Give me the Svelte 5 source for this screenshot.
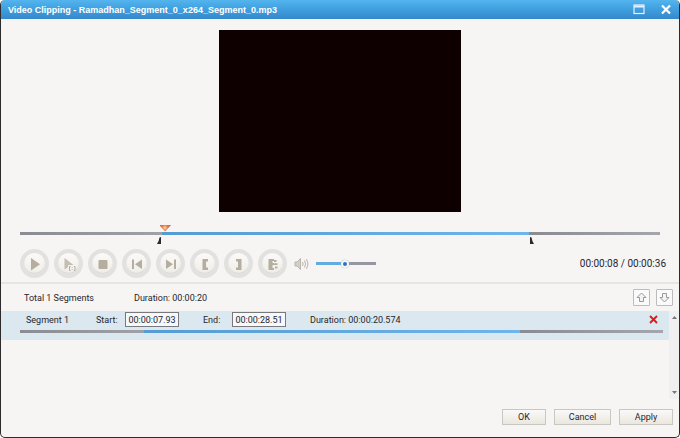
<script>
  let total = 36
  let position = $state(22.2)
  let volume = $state(48)

  let clip = { from: 22.2, to: 79.6 }

  let segments = $state([
    { id: 1, start: '00:00:07.93', end: '00:00:28.51', duration: '00:00:20.574', from: 19.3, to: 77.8 }
  ])

  const controls = [
    { name: 'Play', icon: 'play' },
    { name: 'Play segment', icon: 'playSegment' },
    { name: 'Stop', icon: 'stop' },
    { name: 'Previous frame', icon: 'prev' },
    { name: 'Next frame', icon: 'next' },
    { name: 'Set start', icon: 'start' },
    { name: 'Set end', icon: 'end' },
    { name: 'New segment', icon: 'add' }
  ]

  function clock(seconds) {
    const s = String(Math.round(seconds) % 60).padStart(2, '0')
    const m = String(Math.floor(seconds / 60)).padStart(2, '0')
    return `00:${m}:${s}`
  }

  function remove(id) {
    segments = segments.filter(s => s.id !== id)
  }
</script>

<main class="window">
  <header>
    <h1>Video Clipping - Ramadhan_Segment_0_x264_Segment_0.mp3</h1>
    <button class="caption" aria-label="Maximize">
      <svg width="12" height="11" viewBox="0 0 12 11">
        <rect x="1" y="1" width="10" height="8.5" fill="none" stroke="#e4f1fb" stroke-width="1.2" />
        <path d="M1 2.4H11" stroke="#e4f1fb" stroke-width="2" />
      </svg>
    </button>
    <button class="caption" aria-label="Close">
      <svg width="12" height="11" viewBox="0 0 12 11">
        <path d="M2 1.5L10 9.5M10 1.5L2 9.5" stroke="#fff" stroke-width="2.2" />
      </svg>
    </button>
  </header>

  <div class="video"></div>

  <div class="timeline">
    <input type="range" class="seek" aria-label="Position" min="0" max="100" step="0.1" bind:value={position}
      style="--from: {clip.from}%; --to: {clip.to}%">
    <svg class="mark in" style="left: {clip.from}%" width="5" height="7" viewBox="0 0 5 7">
      <path d="M4 0V7H0Q2 4 2.5 0.5Z" fill="#2a2a2c" />
    </svg>
    <svg class="mark out" style="left: {clip.to}%" width="5" height="7" viewBox="0 0 5 7">
      <path d="M1 0V7H5Q3 4 2.5 0.5Z" fill="#2a2a2c" />
    </svg>
  </div>

  <div class="controls">
    {#each controls as control}
      <button class="round" aria-label={control.name}>
        <svg width="14" height="14" viewBox="0 0 14 14" fill="#b5ad9f">
          {#if control.icon == 'play'}
            <path d="M3 1V13.5L12 7.2Z" />
          {:else if control.icon == 'playSegment'}
            <path d="M2.5 1V12.5L6 10V8H11.5Z" fill="#c3bdb2" />
            <path d="M8.5 9.5H7.5V13.5H8.5M12 9.5H13V13.5H12M10.2 10V10.8M10.2 12V12.8" fill="none" stroke="#b5ad9f" />
          {:else if control.icon == 'stop'}
            <rect x="2.5" y="3" width="9" height="9" rx="1" />
          {:else if control.icon == 'prev'}
            <path d="M2 2.5H4V12H2ZM12 2.5V12L5 7.2Z" />
          {:else if control.icon == 'next'}
            <path d="M10 2.5H12V12H10ZM2 2.5V12L9 7.2Z" />
          {:else if control.icon == 'start'}
            <path d="M4.5 2H10V4.5H8V10.5H10V13H4.5Z" />
          {:else if control.icon == 'end'}
            <path d="M9.5 2H4V4.5H6V10.5H4V13H9.5Z" />
          {:else}
            <path d="M2.5 2H8V4H6.5V6H8V8H6.5V11H8V13H2.5Z" />
            <path d="M8 3H10.5V5H8ZM8 6.2H11.5V8H8ZM9 9.5H11.5V11.5H9Z" />
          {/if}
        </svg>
      </button>
    {/each}

    <svg class="speaker" width="16" height="14" viewBox="0 0 16 14" fill="none" stroke="#b9b5ad">
      <path d="M1 5H3L6.5 1.5V12.5L3 9H1Z" fill="#d2cfc8" />
      <path d="M8.5 5Q9.7 7 8.5 9M10.5 3.5Q12.5 7 10.5 10.5M12.5 2Q15.5 7 12.5 12" />
    </svg>
    <input type="range" class="volume" aria-label="Volume" min="0" max="100" bind:value={volume}
      style="--level: {volume}%">

    <span class="time">{clock(total * position / 100)} / {clock(total)}</span>
  </div>

  <section class="segments">
    <div class="summary">
      <span class="count">Total {segments.length} Segments</span>
      <span>Duration: 00:00:20</span>
      <div class="order">
        <button aria-label="Move up">
          <svg width="11" height="11" viewBox="0 0 11 11">
            <path d="M5.5 1L10 5.5H7.5V9.5H3.5V5.5H1Z" fill="#f3f3f3" stroke="#9a9a9c" />
          </svg>
        </button>
        <button aria-label="Move down">
          <svg width="11" height="11" viewBox="0 0 11 11">
            <path d="M5.5 10L10 5.5H7.5V1.5H3.5V5.5H1Z" fill="#f3f3f3" stroke="#9a9a9c" />
          </svg>
        </button>
      </div>
    </div>

    <div class="list">
      <div class="rows">
        {#each segments as segment (segment.id)}
          <article>
            <div class="fields">
              <span class="name">Segment {segment.id}</span>
              <label for="start-{segment.id}">Start:</label>
              <input type="text" id="start-{segment.id}" bind:value={segment.start}>
              <label for="end-{segment.id}">End:</label>
              <input type="text" id="end-{segment.id}" bind:value={segment.end}>
              <span>Duration: {segment.duration}</span>
              <button class="remove" aria-label="Remove segment" onclick={() => remove(segment.id)}>
                <svg width="9" height="9" viewBox="0 0 9 9">
                  <path d="M1 1L8 8M8 1L1 8" stroke="#d3201c" stroke-width="1.9" />
                </svg>
              </button>
            </div>
            <div class="track" style="--from: {segment.from}%; --to: {segment.to}%"></div>
          </article>
        {/each}
      </div>
      <div class="scrollbar">
        <svg width="5" height="3" viewBox="0 0 5 3"><path d="M0 3L2.5 0L5 3Z" fill="#77777c" /></svg>
        <svg width="5" height="3" viewBox="0 0 5 3"><path d="M0 0L2.5 3L5 0Z" fill="#77777c" /></svg>
      </div>
    </div>
  </section>

  <footer>
    <button class="ok">OK</button>
    <button class="cancel">Cancel</button>
    <button class="apply">Apply</button>
  </footer>
</main>

<style>
:global(body) {
  background: #fff;
}

.window {
  box-sizing: border-box;
  min-height: 100vh;
  display: flex;
  flex-direction: column;
  overflow: hidden;
  border: 1px solid #2d2b2c;
  border-top: 0;
  border-radius: 5px;
  background: #f6f5f4;
  color: #26262e;
  font: 9px/12px Roboto, "Noto Sans", sans-serif;
}

button, input {
  box-sizing: border-box;
  margin: 0;
  padding: 0;
  color: inherit;
  font: inherit;
}

button {
  display: flex;
  align-items: center;
  justify-content: center;
}

svg {
  display: block;
}

header {
  display: flex;
  align-items: center;
  height: 19px;
  margin: 0 -1px;
  padding: 0 8px;
  background: linear-gradient(#55b4ee, #42a3e2 40%, #3588cb);
}

h1 {
  flex: 1;
  margin: 0;
  color: #fff;
  font: bold 9px/18px "Liberation Sans", Arial, sans-serif;
}

.caption {
  border: 0;
  background: none;
  margin-left: 15px;
}

.video {
  align-self: center;
  width: 242px;
  height: 182px;
  margin-top: 11px;
  background: #0e0000;
}

.timeline {
  position: relative;
  margin: 20px 19px 0;
  height: 13px;
}

input[type="range"] {
  display: block;
  appearance: none;
  width: 100%;
  height: 3px;
}

.seek, .track {
  background: linear-gradient(90deg, #8b8c92, #a0a1a7 var(--from), #559cd3 var(--from), #6db5ea var(--to), #8b8c92 var(--to), #a4a6ae);
}

.seek::-webkit-slider-thumb {
  appearance: none;
  width: 11px;
  height: 7px;
  margin-top: -9px;
  background: radial-gradient(circle at 45% 40%, #f9d5b5, #e57a3c 40%, #cf5a20);
  clip-path: polygon(0 0, 100% 0, 100% 15%, 50% 100%, 0 15%);
}

.mark {
  position: absolute;
  top: 5px;
}

.mark.in {
  transform: translateX(-100%);
}

.controls {
  display: flex;
  align-items: center;
  gap: 5px;
  height: 37px;
  padding: 0 13px 0 19px;
  border-bottom: 2px solid #e6e5e3;
}

.round {
  flex: none;
  width: 29px;
  height: 29px;
  border: 4px solid #e2e1e0;
  border-radius: 50%;
  background: linear-gradient(#fbfaf8, #efede7) padding-box;
  box-shadow: inset 0 -1px 1px #d9d6cf;
}

.speaker {
  flex: none;
  margin-left: 2px;
}

input.volume {
  width: 60px;
  margin-left: 1px;
  background: linear-gradient(90deg, #62acdf var(--level), #9697a0 var(--level));
}

.volume::-webkit-slider-thumb {
  appearance: none;
  width: 8px;
  height: 8px;
  border: 2px solid #f3f6fa;
  border-radius: 50%;
  background: #2f72bd;
  box-shadow: 0 0 1px #8f9aa8;
}

.time {
  margin-left: auto;
  font-size: 10px;
}

.segments {
  flex: 1;
  display: flex;
  flex-direction: column;
}

.summary {
  display: flex;
  align-items: center;
  height: 27px;
  padding: 0 6px 0 23px;
}

.count {
  width: 110px;
}

.order {
  display: flex;
  gap: 6px;
  margin-left: auto;
}

.order button {
  width: 17px;
  height: 17px;
  border: 1px solid #bcbcbf;
  border-radius: 1px;
  background: #fafafa;
}

.list {
  flex: 1;
  display: flex;
}

.rows {
  flex: 1;
}

article {
  height: 29px;
  padding: 1px 6px 0 19px;
  box-sizing: border-box;
  background: #dce8ef;
}

.fields {
  display: flex;
  align-items: center;
  padding-left: 6px;
  margin-bottom: 3px;
}

.name {
  width: 70px;
}

.fields label {
  width: 29px;
}

.fields input {
  width: 54px;
  height: 15px;
  margin-right: 24px;
  border: 1px solid #77797f;
  background: #f6f8fa;
  text-align: center;
}

.remove {
  margin-left: auto;
  margin-right: 5px;
  border: 0;
  background: none;
}

.track {
  height: 3px;
}

.scrollbar {
  display: flex;
  flex-direction: column;
  align-items: center;
  justify-content: space-between;
  width: 10px;
  padding: 5px 0;
  box-sizing: border-box;
  background: #f0f0f0;
}

footer {
  display: flex;
  justify-content: flex-end;
  gap: 8px;
  padding: 10px 6px 12px;
}

footer button {
  height: 16px;
  border: 1px solid #c9c7c1;
  background: linear-gradient(#faf9f8, #ebe7df);
}

.ok {
  width: 44px;
}

.cancel {
  width: 57px;
}

.apply {
  width: 54px;
}
</style>
